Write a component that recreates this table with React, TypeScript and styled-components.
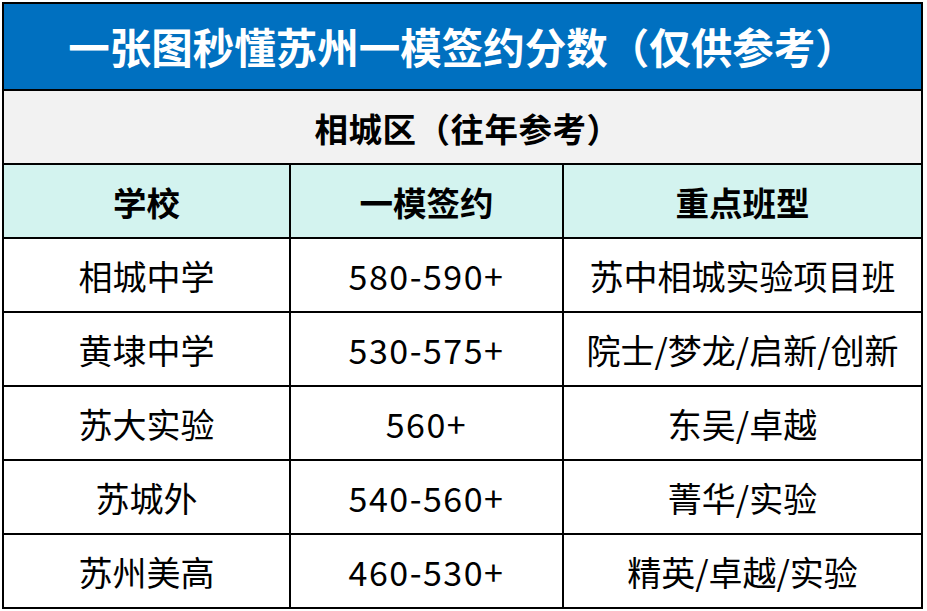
import styled, { createGlobalStyle } from 'styled-components';

const GlobalStyle = createGlobalStyle`
  html, body {
    margin: 0;
    padding: 0;
    background: #ffffff;
  }
  body {
    font-family: "Noto Sans CJK SC", "Noto Sans", sans-serif;
  }
`;

const rows = [
  { school: '相城中学', score: '580-590+', classes: '苏中相城实验项目班' },
  { school: '黄埭中学', score: '530-575+', classes: '院士/梦龙/启新/创新' },
  { school: '苏大实验', score: '560+', classes: '东吴/卓越' },
  { school: '苏城外', score: '540-560+', classes: '菁华/实验' },
  { school: '苏州美高', score: '460-530+', classes: '精英/卓越/实验' },
];

const App = () => {
  return (
    <>
      <GlobalStyle />
      <S_Page>
        <S_Table>
          <S_Title>一张图秒懂苏州一模签约分数（仅供参考）</S_Title>
          <S_District>相城区（往年参考）</S_District>
          <S_HeadCell>学校</S_HeadCell>
          <S_HeadCell>一模签约</S_HeadCell>
          <S_HeadCell>重点班型</S_HeadCell>
          {rows.map((row) => (
            <>
              <S_Cell key={row.school + '-s'}>{row.school}</S_Cell>
              <S_Cell key={row.school + '-n'} $numeric>
                {row.score}
              </S_Cell>
              <S_Cell key={row.school + '-c'}>{row.classes}</S_Cell>
            </>
          ))}
        </S_Table>
      </S_Page>
    </>
  );
};

export default App;

const S_Page = styled.div`
  width: 927px;
  height: 611px;
  padding: 2px 0 0 2px;
  box-sizing: border-box;
  background: #ffffff;
`;

const S_Table = styled.div`
  display: grid;
  grid-template-columns: 285px 271px 357px;
  grid-template-rows: 85px 72px 72px repeat(5, 72px);
  gap: 2px;
  padding: 2px;
  width: fit-content;
  background: #000000;
`;

const S_Base = styled.div`
  display: flex;
  align-items: center;
  justify-content: center;
  white-space: nowrap;
  color: #000000;
`;

const S_Title = styled(S_Base)`
  grid-column: 1 / -1;
  background: #0070c0;
  color: #ffffff;
  font-size: 41.5px;
  font-weight: 700;
  padding-bottom: 2px;
`;

const S_District = styled(S_Base)`
  grid-column: 1 / -1;
  background: #f2f2f2;
  font-size: 33.5px;
  font-weight: 700;
  letter-spacing: 0.5px;
  padding-left: 10px;
`;

const S_HeadCell = styled(S_Base)`
  background: #d3f3ef;
  font-size: 33.5px;
  font-weight: 700;
`;

const S_Cell = styled(S_Base)<{ $numeric?: boolean }>`
  background: #ffffff;
  font-size: 34px;
  font-weight: 400;
  letter-spacing: ${({ $numeric }) => ($numeric ? '1.5px' : '0')};
`;
